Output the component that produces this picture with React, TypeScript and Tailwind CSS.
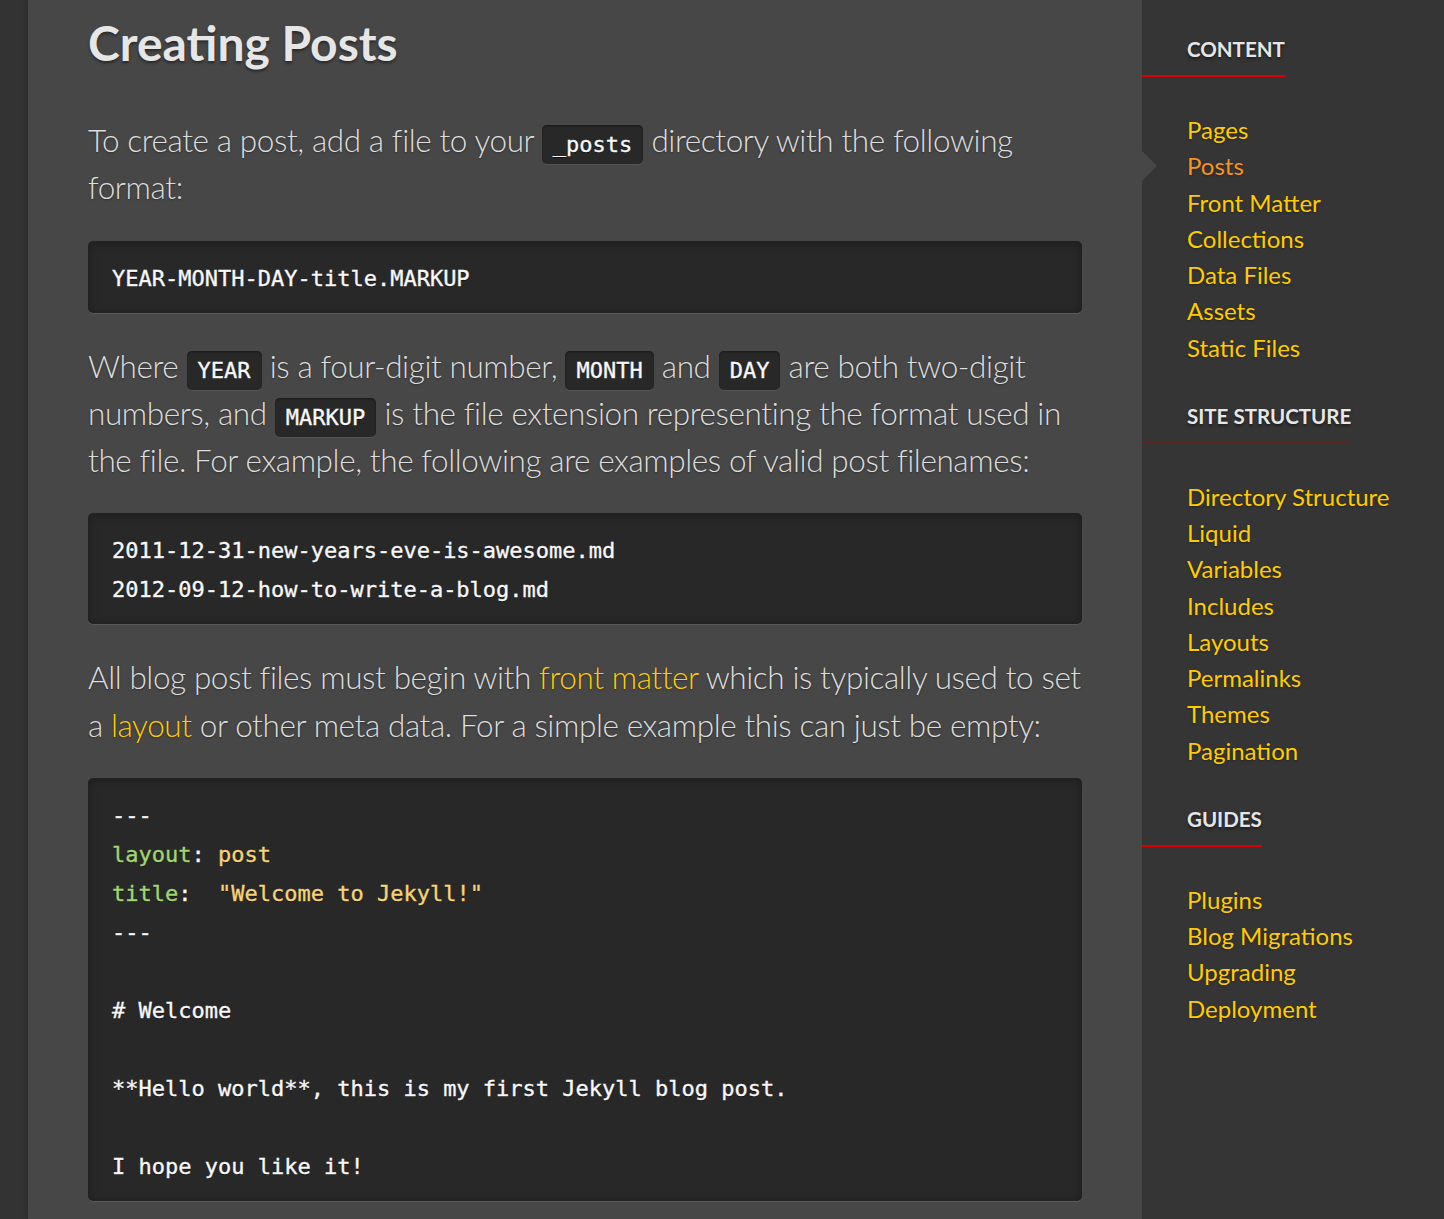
const mono = "font-['DejaVu_Sans_Mono','Liberation_Mono',monospace]";

function Code({ children }: { children: React.ReactNode }) {
  return (
    <code
      className={`${mono} rounded-[5px] bg-[#282828] px-[11px] py-[7px] text-[22px] leading-none tracking-normal text-[#f8f8f8] [-webkit-text-stroke:0.35px_#f8f8f8] [text-shadow:0_1px_0_rgba(0,0,0,0.6)] shadow-[0_1px_0_rgba(255,255,255,0.08),inset_0_1px_2px_rgba(0,0,0,0.4)]`}
    >
      {children}
    </code>
  );
}

function Block({ children }: { children: React.ReactNode }) {
  return (
    <pre
      className={`${mono} rounded-[5px] bg-[#282828] px-[24px] pt-[17px] pb-[15px] text-[22px] leading-[39px] tracking-normal text-[#f8f8f8] [-webkit-text-stroke:0.35px_currentColor] [text-shadow:0_1px_0_rgba(0,0,0,0.6)] shadow-[inset_0_1px_10px_rgba(0,0,0,0.3),0_1px_0_rgba(255,255,255,0.1),0_-1px_0_rgba(0,0,0,0.5)]`}
    >
      {children}
    </pre>
  );
}

function A({ children }: { children: React.ReactNode }) {
  return <a className="text-[#ffcc00]">{children}</a>;
}

const sections = [
  {
    title: 'CONTENT',
    links: ['Pages', 'Posts', 'Front Matter', 'Collections', 'Data Files', 'Assets', 'Static Files'],
  },
  {
    title: 'SITE STRUCTURE',
    links: ['Directory Structure', 'Liquid', 'Variables', 'Includes', 'Layouts', 'Permalinks', 'Themes', 'Pagination'],
  },
  {
    title: 'GUIDES',
    links: ['Plugins', 'Blog Migrations', 'Upgrading', 'Deployment'],
  },
];

export default function App() {
  return (
    <div className="flex min-h-[1219px] bg-[#333333] font-['Lato','Noto_Sans',sans-serif]">
      {/* left gutter */}
      <div className="w-[28px] shrink-0 bg-[#333333]" />

      {/* article */}
      <main className="w-[1114px] shrink-0 bg-[#474747] px-[60px] pt-[13px] text-[#dddddd] shadow-[0_0_6px_rgba(0,0,0,0.25)]">
        <h1 className="text-[48px] font-bold leading-[60px] text-[#e6e6e6] [text-shadow:0_2px_3px_rgba(0,0,0,0.45)]">
          Creating Posts
        </h1>

        <div className="mt-[44px] flex flex-col gap-[30px] text-[31.5px] font-light leading-[47.25px] tracking-[-0.4px] [text-shadow:0_1px_2px_rgba(0,0,0,0.35)]">
          <p>
            To create a post, add a file to your <Code>_posts</Code> directory with the following format:
          </p>

          <Block>YEAR-MONTH-DAY-title.MARKUP</Block>

          <p>
            Where <Code>YEAR</Code> is a four-digit number, <Code>MONTH</Code> and <Code>DAY</Code> are both two-digit
            numbers, and <Code>MARKUP</Code> is the file extension representing the format used in the file. For
            example, the following are examples of valid post filenames:
          </p>

          <Block>
            {'2011-12-31-new-years-eve-is-awesome.md\n2012-09-12-how-to-write-a-blog.md'}
          </Block>

          <p>
            All blog post files must begin with <A>front matter</A> which is typically used to set a <A>layout</A> or
            other meta data. For a simple example this can just be empty:
          </p>

          <Block>
            {'---\n'}
            <span className="text-[#a2d672]">layout</span>
            {': '}
            <span className="text-[#f6d477]">post</span>
            {'\n'}
            <span className="text-[#a2d672]">title</span>
            {':  '}
            <span className="text-[#f6d477]">"Welcome to Jekyll!"</span>
            {'\n---\n\n# Welcome\n\n**Hello world**, this is my first Jekyll blog post.\n\nI hope you like it!'}
          </Block>
        </div>
      </main>

      {/* sidebar */}
      <aside className="flex-1 bg-[#353535] pt-[34px]">
        {sections.map((s, i) => (
          <div key={s.title} className={i > 0 ? 'mt-[35px]' : ''}>
            <div className="inline-flex flex-col">
              <h4 className="pb-[11px] pl-[45px] text-[20.5px] font-bold leading-[30px] text-[#e6e6e6] [text-shadow:0_2px_3px_rgba(0,0,0,0.5)]">
                {s.title}
              </h4>
              <div className={i === 1 ? 'h-px bg-[#5a2626]' : 'h-[2px] bg-[#dd0000]'} />
            </div>
            <ul className={i === 1 ? 'mt-[36px]' : 'mt-[35px]'}>
              {s.links.map(l => {
                const current = l === 'Posts';
                return (
                  <li key={l} className="relative pl-[45px] text-[24px] leading-[36.25px] [text-shadow:0_1px_2px_rgba(0,0,0,0.35)]">
                    {current && (
                      <span className="absolute left-0 top-1/2 h-0 w-0 -translate-y-1/2 border-y-[15px] border-l-[15px] border-y-transparent border-l-[#474747]" />
                    )}
                    <a className={current ? 'text-[#f7941d]' : 'text-[#ffcc00]'}>{l}</a>
                  </li>
                );
              })}
            </ul>
          </div>
        ))}
      </aside>
    </div>
  );
}
